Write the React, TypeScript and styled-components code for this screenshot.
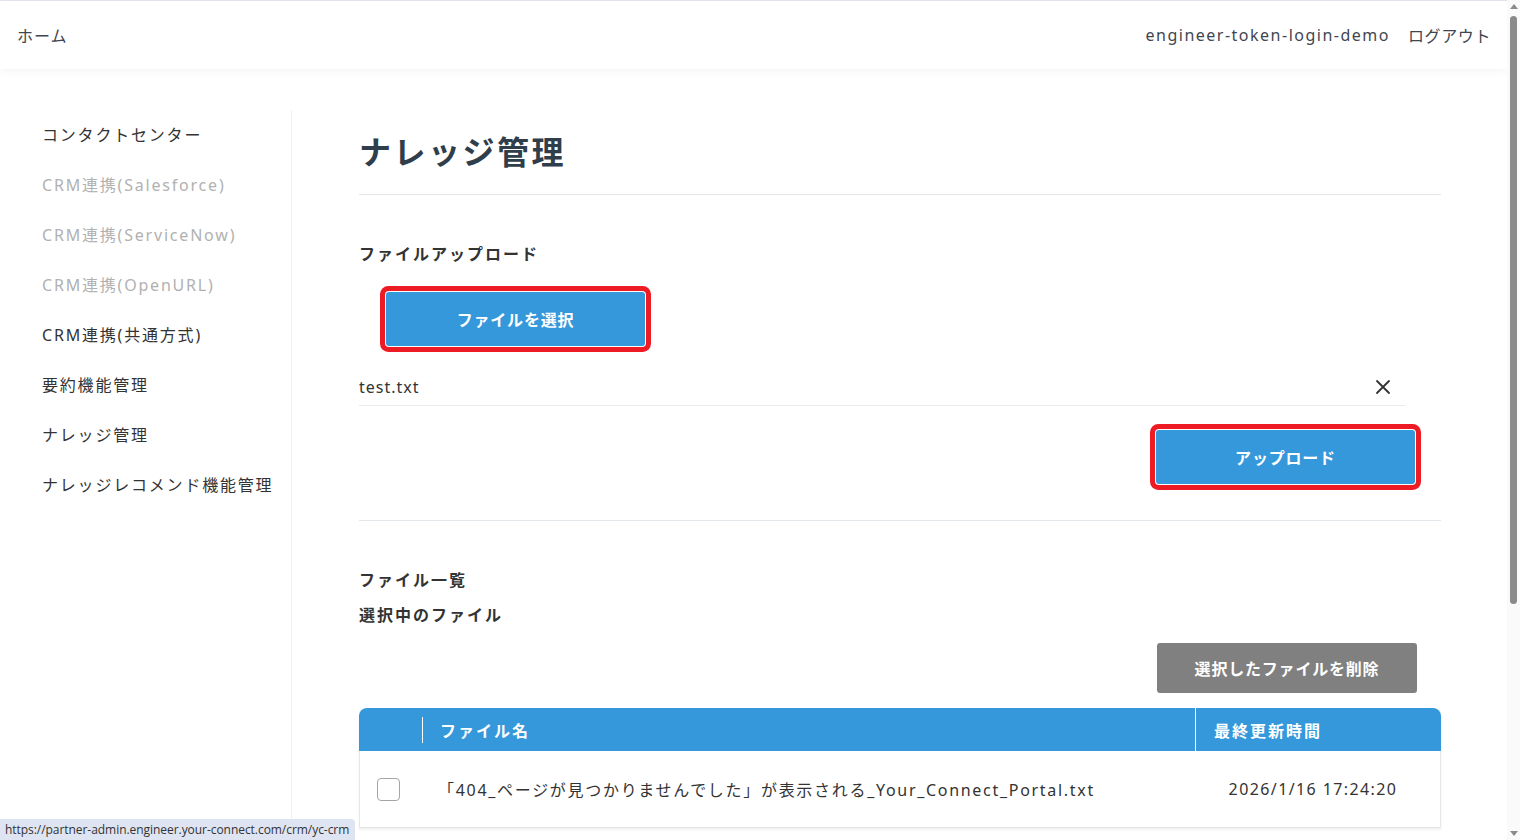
import styled, { createGlobalStyle } from "styled-components";

const GlobalStyle = createGlobalStyle`
  html, body {
    margin: 0;
    padding: 0;
    background: #fff;
  }
  body {
    font-family: "Noto Sans", "Noto Sans CJK JP", sans-serif;
    color: #333;
  }
`;

const Page = styled.div`
  display: flex;
  flex-direction: column;
  min-height: 100vh;
  margin-right: 13px;
  border-top: 1px solid #e4e2ee;
  box-sizing: border-box;
`;

const Header = styled.header`
  height: 68px;
  flex-shrink: 0;
  display: flex;
  align-items: center;
  justify-content: space-between;
  padding: 0 16px 0 17px;
  background: #fff;
  box-shadow: 0 3px 8px rgba(0, 0, 0, 0.04);
  font-size: 16px;
  color: #3f4650;
`;

const HeaderLink = styled.span<{ $spacing?: number }>`
  letter-spacing: ${(p) => p.$spacing ?? 1}px;
`;

const HeaderRight = styled.div`
  display: flex;
  align-items: center;
  gap: 18px;
`;

const Body = styled.div`
  flex: 1;
  display: flex;
  padding-top: 41px;
`;

const Sidebar = styled.nav`
  width: 291px;
  flex-shrink: 0;
  border-right: 1px solid #f0f0f0;
  padding-top: 13px;
`;

const NavItem = styled.div<{ $disabled?: boolean }>`
  height: 50px;
  padding-left: 42px;
  font-size: 16px;
  line-height: 24px;
  letter-spacing: 1.8px;
  color: ${(p) => (p.$disabled ? "#b1b1b1" : "#333")};
`;

const Main = styled.main`
  flex: 1;
  padding: 18px 66px 12px 67px;
`;

const Title = styled.h1`
  margin: 0;
  padding-bottom: 18px;
  border-bottom: 1px solid #e3e8ec;
  font-size: 32px;
  line-height: 48px;
  font-weight: 700;
  letter-spacing: 2.5px;
  color: #2f3e4a;
`;

const SectionTitle = styled.h2<{ $top: number }>`
  margin: ${(p) => p.$top}px 0 0;
  font-size: 16px;
  line-height: 24px;
  font-weight: 700;
  letter-spacing: 2px;
  color: #333;
`;

const Button = styled.button<{ $tone?: "blue" | "gray"; $marked?: boolean }>`
  display: block;
  width: 259px;
  height: 54px;
  border: none;
  border-radius: 3px;
  background: ${(p) => (p.$tone === "gray" ? "#808080" : "#3498db")};
  color: #fff;
  font-family: inherit;
  font-size: 16px;
  font-weight: 700;
  letter-spacing: 0.8px;
  box-shadow: ${(p) => (p.$marked ? "0 0 0 1px #fff, 0 0 0 6px #ed1c24" : "none")};
`;

const PickButton = styled(Button)`
  margin: 26px 0 0 27px;
`;

const UploadButton = styled(Button)`
  margin: 24px 26px 0 auto;
`;

const DeleteButton = styled(Button)`
  height: 50px;
  width: 260px;
  margin: 16px 24px 0 auto;
`;

const FileRow = styled.div`
  display: flex;
  align-items: center;
  justify-content: space-between;
  margin: 21px 36px 0 0;
  padding: 8px 14px 6px 0;
  border-bottom: 1px solid #e5eaee;
  font-size: 16px;
  line-height: 24px;
  letter-spacing: 1px;
  color: #333;
`;

const Divider = styled.hr`
  margin: 36px 0 0;
  border: none;
  border-top: 1px solid #e3e8ec;
`;

const Table = styled.table`
  width: 100%;
  margin-top: 15px;
  border-collapse: separate;
  border-spacing: 0;
  table-layout: fixed;
  box-shadow: 0 2px 3px rgba(0, 0, 0, 0.06);
  border-radius: 8px 8px 0 0;
`;

const Th = styled.th<{ $divider?: "short" | "full" }>`
  height: 43px;
  padding: 0 0 0 18px;
  text-align: left;
  color: #fff;
  font-size: 16px;
  font-weight: 700;
  letter-spacing: 2px;
  background: ${(p) =>
    p.$divider === "short"
      ? "linear-gradient(#fff, #fff) left center / 1px 26px no-repeat, #3498db"
      : "#3498db"};
  border-left: ${(p) => (p.$divider === "full" ? "1px solid #fff" : "none")};

  &:first-child {
    border-top-left-radius: 8px;
  }
  &:last-child {
    border-top-right-radius: 8px;
  }
`;

const Td = styled.td<{ $align?: "left" | "center" }>`
  height: 76px;
  padding: 0 0 0 16px;
  text-align: ${(p) => p.$align ?? "left"};
  font-size: 16px;
  letter-spacing: 1.7px;
  color: #333;
  border-bottom: 1px solid #e3e3e3;
  white-space: nowrap;

  &:first-child {
    padding-left: 17px;
    border-left: 1px solid #e8e8e8;
  }
  &:last-child {
    padding: 0 9px 0 0;
    border-right: 1px solid #e8e8e8;
    letter-spacing: 1.4px;
  }
`;

const Check = styled.input`
  appearance: none;
  display: block;
  width: 23px;
  height: 23px;
  margin: 0;
  border: 1.5px solid #a5a5a5;
  border-radius: 4px;
  background: #fff;
`;

/* browser chrome drawn over the page: scrollbar and link preview */
const ScrollTrack = styled.div`
  position: fixed;
  top: 0;
  right: 0;
  width: 13px;
  height: 100vh;
  display: flex;
  flex-direction: column;
  align-items: center;
  background: #fafafa;
`;

const ScrollArrow = styled.svg`
  flex-shrink: 0;
  margin: 4px 0;
`;

const ScrollThumb = styled.div`
  width: 7px;
  height: 588px;
  margin-top: 3px;
  border-radius: 4px;
  background: #8a8a8a;
`;

const ScrollSpacer = styled.div`
  flex: 1;
`;

const StatusBar = styled.div`
  position: fixed;
  left: 0;
  bottom: 0;
  padding: 2px 6px 2px 5px;
  background: #dee4f2;
  border-top-right-radius: 4px;
  font-family: "Open Sans", "Noto Sans", sans-serif;
  font-size: 12px;
  line-height: 17px;
  letter-spacing: -0.05px;
  color: #333;
`;

const CloseIcon = () => (
  <svg width="16" height="16" viewBox="0 0 16 16" fill="none">
    <path d="M2 2L14 14M14 2L2 14" stroke="#333" strokeWidth="1.8" strokeLinecap="round" />
  </svg>
);

const navItems = [
  { label: "コンタクトセンター" },
  { label: "CRM連携(Salesforce)", disabled: true },
  { label: "CRM連携(ServiceNow)", disabled: true },
  { label: "CRM連携(OpenURL)", disabled: true },
  { label: "CRM連携(共通方式)" },
  { label: "要約機能管理" },
  { label: "ナレッジ管理" },
  { label: "ナレッジレコメンド機能管理" },
];

const files = [
  {
    name: "「404_ページが見つかりませんでした」が表示される_Your_Connect_Portal.txt",
    updatedAt: "2026/1/16 17:24:20",
  },
];

export default function App() {
  return (
    <>
      <GlobalStyle />
      <Page>
        <Header>
          <HeaderLink>ホーム</HeaderLink>
          <HeaderRight>
            <HeaderLink $spacing={1.5}>engineer-token-login-demo</HeaderLink>
            <HeaderLink $spacing={0.6}>ログアウト</HeaderLink>
          </HeaderRight>
        </Header>
        <Body>
          <Sidebar>
            {navItems.map((item) => (
              <NavItem key={item.label} $disabled={item.disabled}>
                {item.label}
              </NavItem>
            ))}
          </Sidebar>
          <Main>
            <Title>ナレッジ管理</Title>
            <SectionTitle $top={47}>ファイルアップロード</SectionTitle>
            <PickButton $marked>ファイルを選択</PickButton>
            <FileRow>
              <span>test.txt</span>
              <CloseIcon />
            </FileRow>
            <UploadButton $marked>アップロード</UploadButton>
            <Divider />
            <SectionTitle $top={47}>ファイル一覧</SectionTitle>
            <SectionTitle $top={11}>選択中のファイル</SectionTitle>
            <DeleteButton $tone="gray">選択したファイルを削除</DeleteButton>
            <Table>
              <colgroup>
                <col style={{ width: 63 }} />
                <col />
                <col style={{ width: 246 }} />
              </colgroup>
              <thead>
                <tr>
                  <Th />
                  <Th $divider="short">ファイル名</Th>
                  <Th $divider="full">最終更新時間</Th>
                </tr>
              </thead>
              <tbody>
                {files.map((f) => (
                  <tr key={f.name}>
                    <Td>
                      <Check type="checkbox" />
                    </Td>
                    <Td>{f.name}</Td>
                    <Td $align="center">{f.updatedAt}</Td>
                  </tr>
                ))}
              </tbody>
            </Table>
          </Main>
        </Body>
      </Page>
      <ScrollTrack>
        <ScrollArrow width="8" height="5" viewBox="0 0 8 5">
          <path d="M0 5L4 0L8 5Z" fill="#8a8a8a" />
        </ScrollArrow>
        <ScrollThumb />
        <ScrollSpacer />
        <ScrollArrow width="8" height="5" viewBox="0 0 8 5">
          <path d="M0 0L8 0L4 5Z" fill="#8a8a8a" />
        </ScrollArrow>
      </ScrollTrack>
      <StatusBar>https://partner-admin.engineer.your-connect.com/crm/yc-crm</StatusBar>
    </>
  );
}
